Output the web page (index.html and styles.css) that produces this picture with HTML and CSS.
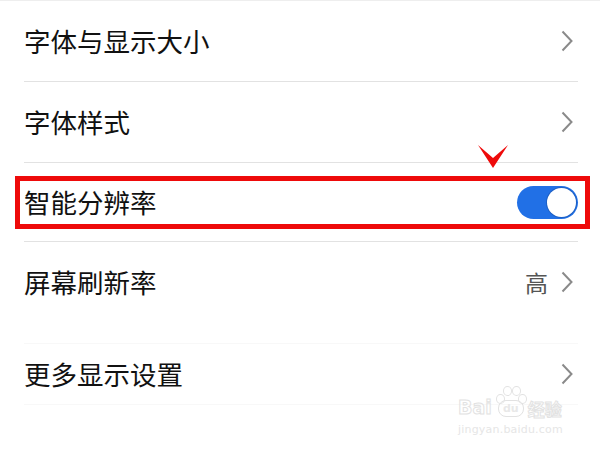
FILE: index.html
```html
<!DOCTYPE html>
<html lang="zh-CN">
<head>
    <meta charset="UTF-8">
    <meta name="viewport" content="width=device-width, initial-scale=1.0">
    <title>显示</title>
    <link rel="stylesheet" href="styles.css">
</head>
<body>
    <div class="page">
        <div class="list">
            <div class="row">
                <span class="label">字体与显示大小</span>
                <svg class="chevron" width="12" height="22" viewBox="0 0 12 22"><polyline points="1.5,1.5 10.5,11 1.5,20.5"/></svg>
            </div>
            <div class="row">
                <span class="label">字体样式</span>
                <svg class="chevron" width="12" height="22" viewBox="0 0 12 22"><polyline points="1.5,1.5 10.5,11 1.5,20.5"/></svg>
            </div>
            <div class="row marked">
                <span class="label">智能分辨率</span>
                <div class="toggle on"><div class="knob"></div></div>
                <!-- annotation drawn over the screenshot -->
                <div class="highlight"></div>
                <svg class="pointer" width="30" height="23" viewBox="0 0 30 23"><polygon points="0,0 15,23 30,0 15,13"/></svg>
            </div>
            <div class="row plain">
                <span class="label">屏幕刷新率</span>
                <span class="value">高</span>
                <svg class="chevron" width="12" height="22" viewBox="0 0 12 22"><polyline points="1.5,1.5 10.5,11 1.5,20.5"/></svg>
            </div>
            <div class="row last">
                <span class="label">更多显示设置</span>
                <svg class="chevron" width="12" height="22" viewBox="0 0 12 22"><polyline points="1.5,1.5 10.5,11 1.5,20.5"/></svg>
            </div>
        </div>

        <div class="watermark">
            <div class="wm-logo">
                <span class="wm-text">Bai</span>
                <span class="paw">
                    <i class="toe t1"></i><i class="toe t2"></i><i class="toe t3"></i><i class="toe t4"></i>
                    <span class="pad">du</span>
                </span>
                <span class="wm-text cn">经验</span>
            </div>
            <div class="wm-url">jingyan.baidu.com</div>
        </div>
    </div>
</body>
</html>
```

FILE: styles.css
```css
body {
    margin: 0;
    background-color: #fff;
    font-family: "Noto Sans CJK SC", "Noto Sans", sans-serif;
    color: #111;
}
.page {
    position: relative;
    width: 600px;
    height: 450px;
    overflow: hidden;
    border-top: 1px solid #eee;
    box-sizing: border-box;
}
.list {
    padding: 0 22px 0 24px;
}
.row {
    display: flex;
    align-items: center;
    height: 80px;
    border-bottom: 1px solid #e2e2e2;
    position: relative;
}
.row.marked {
    height: 78px;
}
.row.plain {
    border-bottom: none;
}
.row.last {
    height: 60px;
    margin-top: 21px;
    border-top: 1px solid #f8f8f8;
    border-bottom: 1px solid #f8f8f8;
}
.label {
    flex: 1;
    font-size: 26.5px;
    line-height: 1;
}
.value {
    font-size: 23px;
    line-height: 1;
    color: #555;
    margin-right: 13px;
}
.chevron {
    margin-right: 5px;
}
.chevron polyline {
    fill: none;
    stroke: #8a8a8a;
    stroke-width: 2;
}
.toggle {
    width: 61px;
    height: 33px;
    border-radius: 17px;
    background-color: #ccc;
    display: flex;
    align-items: center;
    padding: 0 2px;
    box-sizing: border-box;
}
.toggle.on {
    background-color: #2170e6;
    justify-content: flex-end;
}
.knob {
    width: 29px;
    height: 29px;
    border-radius: 50%;
    background-color: #fff;
    box-shadow: 0 0 0 1px #1c5fc4;
}
.highlight {
    position: absolute;
    left: -9px;
    right: -12px;
    top: 13px;
    height: 53px;
    border: 5px solid #ee0a0a;
    box-sizing: border-box;
}
.pointer {
    position: absolute;
    left: 454px;
    top: -18px;
}
.pointer polygon {
    fill: #ee0a0a;
}
.watermark {
    position: absolute;
    left: 458px;
    top: 384px;
    color: transparent;
    font-family: "DejaVu Sans", sans-serif;
}
.wm-logo {
    display: flex;
    align-items: flex-end;
}
.wm-text {
    font-size: 19px;
    font-weight: bold;
    line-height: 1;
    -webkit-text-stroke: 1px #e2e2e2;
}
.wm-text.cn {
    font-family: "Noto Sans CJK SC", sans-serif;
    font-size: 17px;
}
.paw {
    position: relative;
    width: 32px;
    height: 32px;
    margin: 0 2px;
}
.toe {
    position: absolute;
    width: 7px;
    height: 8px;
    border: 1px solid #e2e2e2;
    border-radius: 50%;
}
.t1 { left: 2px; top: 9px; }
.t2 { left: 9px; top: 1px; }
.t3 { left: 18px; top: 1px; }
.t4 { left: 24px; top: 9px; }
.pad {
    position: absolute;
    left: 4px;
    top: 15px;
    width: 24px;
    height: 15px;
    border: 1px solid #e2e2e2;
    border-radius: 8px;
    font-size: 11px;
    font-weight: bold;
    line-height: 15px;
    text-align: center;
    color: #e8e8e8;
}
.wm-url {
    margin-top: 6px;
    font-size: 11px;
    letter-spacing: 0.2px;
    color: #e6e6e6;
}
```
